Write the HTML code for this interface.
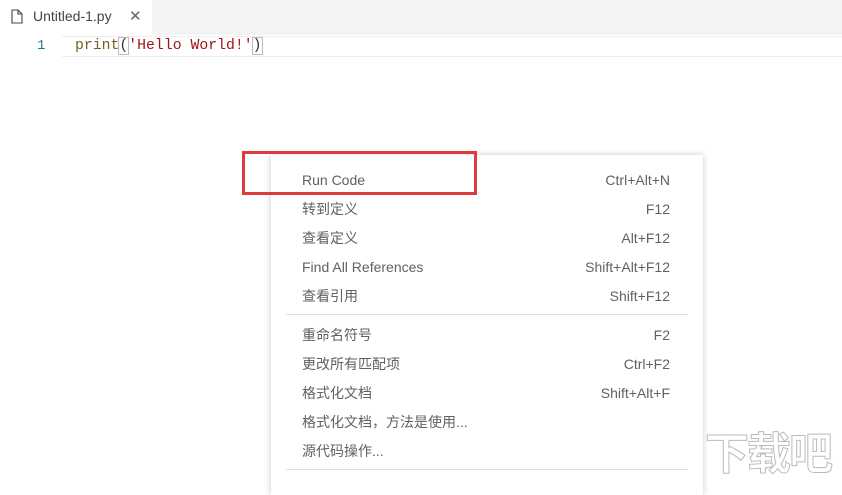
<!DOCTYPE html>
<html><head><meta charset="utf-8"><style>
body{margin:0;width:842px;height:481px;background:#fff;position:relative;overflow:hidden;font-family:"Segoe UI","Liberation Sans","Noto Sans CJK SC",sans-serif}
.tabbar{position:absolute;left:0;top:0;width:842px;height:35px;background:#f3f3f3}
.tab{position:absolute;left:0;top:0;width:152px;height:35px;background:#fff;font-size:14px;color:#444}
.cur{position:absolute;left:62px;top:36px;width:780px;height:19px;border-top:1px solid #eee;border-bottom:1px solid #eee}
.code{position:absolute;left:75px;top:38px;font-family:"Liberation Mono",monospace;font-size:14.8px;color:#795e26}
.ln{position:absolute;left:37px;top:38px;font-family:"Liberation Mono",monospace;font-size:14px;color:#237893}
.menu{position:absolute;left:271px;top:155px;width:432px;height:340px;background:#fff;box-shadow:0 0 6px rgba(0,0,0,.22)}
.it{position:absolute;left:31px;right:33px;height:20px;font-size:14px;color:#616161;line-height:20px}
.it span{position:absolute;right:0;top:0}
.sep{position:absolute;left:15px;right:15px;height:1px;background:#ddd}
.red{position:absolute;left:242px;top:151px;width:229px;height:38px;border:3px solid #e03a3a}
</style></head><body>
<div class="tabbar"><div class="tab">
<svg style="position:absolute;left:11px;top:9px" width="12" height="15" viewBox="0 0 12 15"><path d="M1 1h6l4 4v9H1z M7 1v4h4" fill="none" stroke="#444" stroke-width="1.1"/></svg>
<div style="position:absolute;left:33px;top:8px">Untitled-1.py</div>
<div style="position:absolute;left:129px;top:7px;font-size:15px;color:#666">✕</div>
</div></div>
<div class="cur"></div>
<div class="ln">1</div>
<div class="code">print<span style="color:#333;outline:1px solid #bbb">(</span><span style="color:#a31515">'Hello World!'</span><span style="color:#333;outline:1px solid #bbb">)</span></div>
<div class="menu">
<div class="it" style="top:15px">Run Code<span>Ctrl+Alt+N</span></div>
<div class="it" style="top:44px">转到定义<span>F12</span></div>
<div class="it" style="top:73px">查看定义<span>Alt+F12</span></div>
<div class="it" style="top:102px">Find All References<span>Shift+Alt+F12</span></div>
<div class="it" style="top:131px">查看引用<span>Shift+F12</span></div>
<div class="sep" style="top:159px"></div>
<div class="it" style="top:170px">重命名符号<span>F2</span></div>
<div class="it" style="top:199px">更改所有匹配项<span>Ctrl+F2</span></div>
<div class="it" style="top:228px">格式化文档<span>Shift+Alt+F</span></div>
<div class="it" style="top:257px">格式化文档，方法是使用...</div>
<div class="it" style="top:286px">源代码操作...</div>
<div class="sep" style="top:314px"></div>
</div>
<div class="red"></div>
<div style="position:absolute;left:705px;top:418px;font-size:44px;color:#fff;-webkit-text-stroke:1px #bbb;font-weight:bold;letter-spacing:-2px">下载吧</div>
</body></html>
